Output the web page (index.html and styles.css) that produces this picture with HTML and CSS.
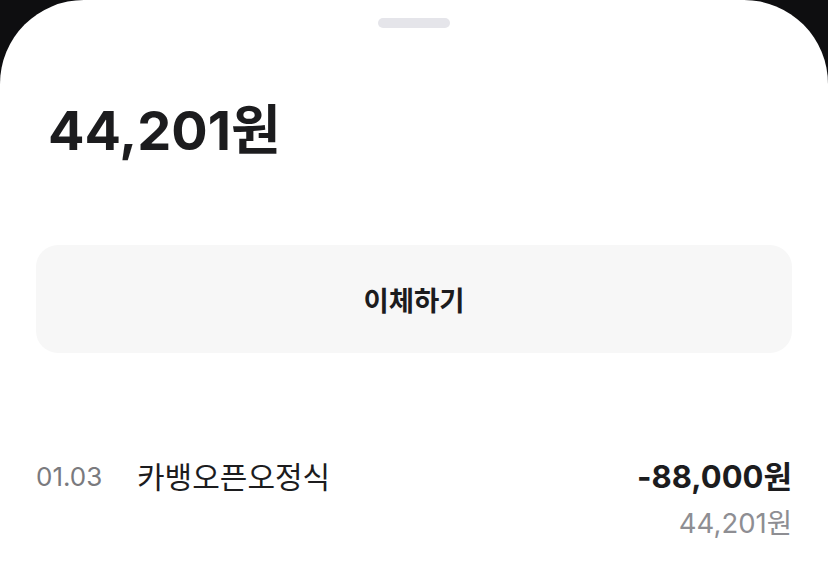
FILE: index.html
```html
<!DOCTYPE html>
<html lang="ko">
<head>
<meta charset="utf-8">
<title>계좌</title>
<link rel="stylesheet" href="styles.css">
</head>
<body>
<div class="sheet">
  <div class="handle-wrap"><div class="handle"></div></div>
  <div class="balance">44,201원</div>
  <button class="transfer">이체하기</button>
  <ul class="tx-list">
    <li class="tx">
      <span class="tx-date">01.03</span>
      <span class="tx-name">카뱅오픈오정식</span>
      <div class="tx-amounts">
        <span class="tx-amount">-88,000원</span>
        <span class="tx-balance">44,201원</span>
      </div>
    </li>
  </ul>
</div>
</body>
</html>
```

FILE: styles.css
```css
* { box-sizing: border-box; }
html, body {
  margin: 0;
  padding: 0;
  background: #0e0e10;
  height: 100%;
  overflow: hidden;
}
body {
  font-family: Inter, "Noto Sans CJK KR", sans-serif;
  color: #1c1c1e;
}
.sheet {
  background: #ffffff;
  height: 583px;
  border-radius: 84px 84px 0 0;
  padding: 0 36px;
}
.handle-wrap {
  display: flex;
  justify-content: center;
  padding-top: 18px;
}
.handle {
  width: 72px;
  height: 10px;
  border-radius: 5px;
  background: #e5e5ea;
}
.balance {
  margin-top: 73px;
  padding-left: 12px;
  font-size: 54px;
  font-weight: 700;
  line-height: 60px;
  color: #1c1c1e;
}
.transfer {
  display: block;
  width: 100%;
  height: 108px;
  margin-top: 84px;
  border: 0;
  border-radius: 22px;
  background: #f7f7f7;
  font-family: inherit;
  font-size: 27.5px;
  font-weight: 700;
  color: #1c1c1e;
}
.tx-list {
  list-style: none;
  margin: 0;
  padding: 0;
  margin-top: 106px;
}
.tx {
  display: flex;
  align-items: flex-start;
}
.tx-date {
  font-size: 26px;
  line-height: 36px;
  color: #7a7a7e;
  width: 101px;
}
.tx-name {
  flex: 1;
  font-size: 30px;
  line-height: 36px;
  color: #1c1c1e;
}
.tx-amounts {
  display: flex;
  flex-direction: column;
  align-items: flex-end;
}
.tx-amount {
  font-size: 31px;
  font-weight: 700;
  line-height: 36px;
  color: #1c1c1e;
}
.tx-balance {
  font-size: 27.5px;
  line-height: 36px;
  color: #8e8e93;
  margin-top: 10px;
}
```
